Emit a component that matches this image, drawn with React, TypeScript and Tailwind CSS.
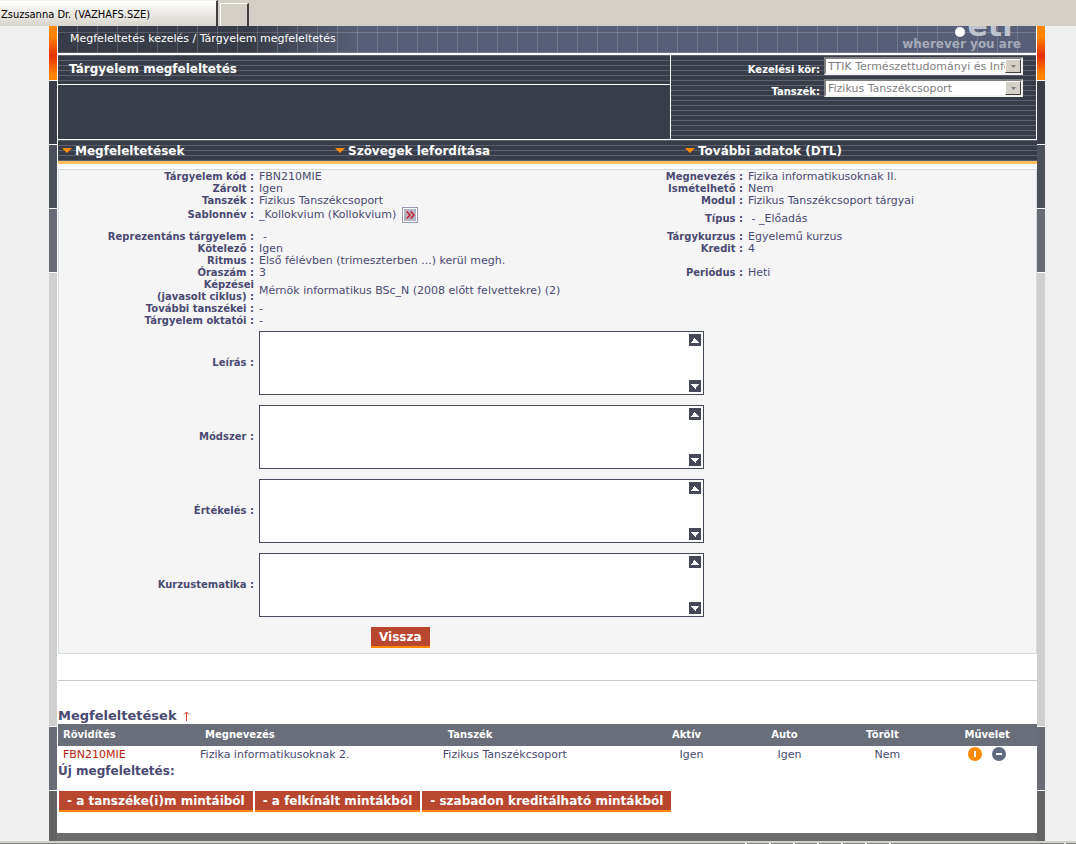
import React from 'react';

const lines =
  'bg-[#383c49] bg-[repeating-linear-gradient(to_bottom,#5d616d_0_1px,transparent_1px_5px)]';

function Rail() {
  return (
    <div aria-hidden="true" className="flex w-2 shrink-0 flex-col gap-px bg-white">
      <div className="h-[54px] bg-[linear-gradient(to_bottom,#ff8400_20%,#e62e00_55%,#ff8400_90%)]" />
      <div className="h-[63px] bg-[#3a3d47]" />
      <div className="h-[63px] bg-[#4c505a]" />
      <div className="h-[63px] bg-[#696c76]" />
      <div className="flex-1 bg-[#d0d0d0]" />
      <div className="h-[63px] bg-[#696c76]" />
      <div className="h-[50px] bg-[#636363]" />
    </div>
  );
}

function Pick({ id, label, value }: { id: string; label: string; value: string }) {
  return (
    <div className="flex h-[22px] items-start justify-end gap-1">
      <label htmlFor={id} className="pt-[5px] text-[10px] leading-4 font-bold text-white">
        {label}
      </label>
      <div className="relative w-[199px]">
        <select
          id={id}
          disabled
          className="block h-[18px] w-full appearance-none border-2 border-t-[#808080] border-r-[#f4f2ee] border-b-[#f4f2ee] border-l-[#808080] bg-white pt-px pr-4 pl-0.5 text-[11px] leading-3 text-[#808080] opacity-100"
        >
          <option>{value}</option>
        </select>
        <span className="pointer-events-none absolute top-0.5 right-0.5 flex h-3.5 w-4 items-center justify-center border border-t-white border-r-[#404040] border-b-[#404040] border-l-white bg-[#d4d0c8]">
          <svg width="5" height="3" viewBox="0 0 5 3" fill="#808080">
            <path d="M0 0h5L2.500 3z" />
          </svg>
        </span>
      </div>
    </div>
  );
}

function MenuItem({ children }: { children: React.ReactNode }) {
  return (
    <a href="#" className="flex items-center gap-[3px] text-xs leading-5 font-bold text-white">
      <svg width="10" height="5" viewBox="0 0 10 5" fill="#ff8a00">
        <path d="M0 0h10L5 5z" />
      </svg>
      {children}
    </a>
  );
}

function Field({
  label,
  value,
  tall = '',
}: {
  label: React.ReactNode;
  value?: React.ReactNode;
  tall?: string;
}) {
  return (
    <div className={`flex items-center gap-[5px] ${tall}`}>
      <dt className="w-[195px] shrink-0 text-right font-bold">{label}</dt>
      <dd className="min-w-0 flex-1 text-[11px]">{value}</dd>
    </div>
  );
}

function SideField({ label, value, tall = '' }: { label: string; value: string; tall?: string }) {
  return (
    <div className={`flex items-center gap-[5px] ${tall}`}>
      <dt className="w-[90px] shrink-0 text-right font-bold">{label}</dt>
      <dd className="min-w-0 flex-1 text-[11px] whitespace-pre">{value}</dd>
    </div>
  );
}

function Arrow({ up }: { up?: boolean }) {
  return (
    <button
      type="button"
      aria-label={up ? 'Fel' : 'Le'}
      className="flex h-3 w-3 items-center justify-center bg-[#444859]"
    >
      <svg width="8" height="5" viewBox="0 0 8 5" fill="#fff" shapeRendering="crispEdges">
        <path d={up ? 'M3 0h1v1h1v1h1v1h1v1h1v1H0V4h1V3h1V2h0V1h1z' : 'M0 0h8v1H7v1H6v1H5v2H4V4H3V3H2V2H1V1H0z'} />
      </svg>
    </button>
  );
}

function Memo({ id, label }: { id: string; label: string }) {
  return (
    <div className="flex items-center gap-[5px]">
      <label htmlFor={id} className="w-[195px] shrink-0 text-right font-bold">
        {label}
      </label>
      <div className="relative w-[445px]">
        <textarea
          id={id}
          readOnly
          className="block h-16 w-full resize-none border border-[#444859] bg-white p-1 pr-5 outline-none"
        />
        <div className="absolute inset-y-[3px] right-[3px] flex flex-col justify-between">
          <Arrow up />
          <Arrow />
        </div>
      </div>
    </div>
  );
}

function Action({ children }: { children: React.ReactNode }) {
  return (
    <button
      type="button"
      className="h-[21px] border-b-2 border-[#ff8a00] bg-[#b9472f] px-2 text-xs leading-4 font-bold text-white"
    >
      {children}
    </button>
  );
}

export default function App() {
  return (
    <div className="flex min-h-screen flex-col bg-[#efefef] font-['DejaVu_Sans',Verdana,sans-serif] text-[10px] leading-3 text-[#4a4a72]">
      <div className="flex h-[26px] shrink-0 items-end bg-[#d4d0c8]">
        <div className="flex h-[26px] w-[218px] items-center border-t border-r-2 border-t-[#f4f2ee] border-r-[#404040] bg-linear-to-b from-white to-[#d8d5ce] pt-0.5 pl-px font-['DejaVu_Sans_Condensed','DejaVu_Sans',sans-serif] text-[11px] text-black">
          Zsuzsanna Dr. (VAZHAFS.SZE)
        </div>
        <div className="ml-0.5 h-[23px] w-[29px] border-t border-r-2 border-l border-t-white border-r-[#404040] border-l-white" />
      </div>

      <div className="flex flex-1 pr-[31px] pl-[49px]">
        <Rail />
        <div className="flex min-w-0 flex-1 flex-col bg-white">
          <header className="relative ml-px mr-px h-[27px] overflow-hidden bg-[repeating-linear-gradient(to_right,transparent_0_19px,rgba(255,255,255,0.16)_19px_20px),linear-gradient(to_bottom,transparent_6px,rgba(255,255,255,0.16)_6px_7px,transparent_7px_26px,rgba(255,255,255,0.16)_26px),linear-gradient(to_right,#383c49_190px,#585e77_300px)]">
            <nav className="pt-[7px] pl-3 text-[11px] text-white">
              Megfeleltetés kezelés / Tárgyelem megfeleltetés
            </nav>
            <div className="absolute -top-3 right-[15px] text-right font-bold">
              <div className="flex items-end justify-end gap-[3px] pr-1 text-[30px] leading-6 text-[#bfc3d0]">
                <span className="mb-px h-2.5 w-2.5 rounded-full bg-white" />
                etr
              </div>
              <div className="text-xs leading-3 text-[#a6aaba]">wherever you are</div>
            </div>
          </header>

          <div className="mt-0.5 ml-px mr-px flex h-[84px]">
            <div className="flex min-w-0 flex-1 flex-col">
              <h1 className={`h-[29px] pl-[11px] text-xs leading-[29px] font-bold text-white ${lines}`}>
                Tárgyelem megfeleltetés
              </h1>
              <div className="mt-px flex-1 bg-[#383d4b]" />
            </div>
            <div className={`ml-px w-[365px] pt-0.5 pr-[13px] ${lines}`}>
              <Pick id="kor" label="Kezelési kör:" value="TTIK Természettudományi és Informatikai Kar" />
              <Pick id="tanszek" label="Tanszék:" value="Fizikus Tanszékcsoport" />
            </div>
          </div>

          <nav
            className={`mt-px ml-px grid h-6 grid-cols-[273fr_350fr_352fr] items-center border-b-[3px] border-[#ffc061] pl-1 ${lines}`}
          >
            <MenuItem>Megfeleltetések</MenuItem>
            <MenuItem>Szövegek lefordítása</MenuItem>
            <MenuItem>További adatok (DTL)</MenuItem>
          </nav>

          <section className="mt-[5px] ml-px border border-[#d3dddd] bg-[#f5f5f5] pb-[5px]">
            <div className="flex pt-px">
              <dl className="min-w-0 flex-1">
                <Field label="Tárgyelem kód :" value="FBN210MIE" />
                <Field label="Zárolt :" value="Igen" />
                <Field label="Tanszék :" value="Fizikus Tanszékcsoport" />
                <Field
                  label="Sablonnév :"
                  tall="h-4"
                  value={
                    <span className="flex items-center gap-1.5">
                      _Kollokvium (Kollokvium)
                      <button
                        type="button"
                        aria-label="Megnyitás"
                        className="flex h-4 w-4 items-center justify-center border border-[#9a9ab0] bg-[#b4b4c6] shadow-[inset_0_0_0_1px_#fff]"
                      >
                        <svg width="9" height="8" viewBox="0 0 9 8" fill="none" stroke="#c22430" strokeWidth="1.600">
                          <path d="M.7.5 4 4 .7 7.500M4.700.5 8 4 4.700 7.500" />
                        </svg>
                      </button>
                    </span>
                  }
                />
                <Field label="Reprezentáns tárgyelem :" value={<span className="pl-1">-</span>} tall="pt-2" />
                <Field label="Kötelező :" value="Igen" />
                <Field label="Ritmus :" value="Első félévben (trimeszterben ...) kerül megh." />
                <Field label="Óraszám :" value="3" />
                <Field
                  label={
                    <>
                      Képzései
                      <br />
                      (javasolt ciklus) :
                    </>
                  }
                  value="Mérnök informatikus BSc_N (2008 előtt felvettekre) (2)"
                />
                <Field label="További tanszékei :" value="-" />
                <Field label="Tárgyelem oktatói :" value="-" />
              </dl>
              <dl className="w-[383px] shrink-0">
                <SideField label="Megnevezés :" value="Fizika informatikusoknak II." />
                <SideField label="Ismételhető :" value="Nem" />
                <SideField label="Modul :" value="Fizikus Tanszékcsoport tárgyai" />
                <SideField label="Típus :" value=" - _Előadás" tall="h-6" />
                <SideField label="Tárgykurzus :" value="Egyelemű kurzus" />
                <SideField label="Kredit :" value="4" />
                <SideField label="Periódus :" value="Heti" tall="pt-3" />
              </dl>
            </div>
            <div className="flex flex-col gap-2.5 pt-1">
              <Memo id="leiras" label="Leírás :" />
              <Memo id="modszer" label="Módszer :" />
              <Memo id="ertekeles" label="Értékelés :" />
              <Memo id="tematika" label="Kurzustematika :" />
            </div>
            <div className="flex pt-2.5 pl-[312px]">
              <Action>Vissza</Action>
            </div>
          </section>

          <hr className="mt-[26px] ml-px border-[#cacaca]" />

          <h2 className="mt-[27px] ml-px flex items-center gap-1.5 text-[13px] leading-4 font-bold">
            Megfeleltetések
            <a href="#" aria-label="Fel">
              <svg width="7" height="10" viewBox="0 0 7 10" fill="none" stroke="#d4402c">
                <path d="M3.500 1v9M1 3.500 3.500 1 6 3.500" />
              </svg>
            </a>
          </h2>
          <table className="ml-px table-fixed border-collapse text-left">
            <colgroup>
              <col className="w-[14%]" />
              <col className="w-[25%]" />
              <col className="w-[20%]" />
              <col className="w-[10%]" />
              <col className="w-[10%]" />
              <col className="w-[10%]" />
              <col className="w-[11%]" />
            </colgroup>
            <thead className="h-[22px] bg-[#6a6d7a] text-white">
              <tr>
                <th className="pl-[5px]">Rövidítés</th>
                <th className="pl-2.5">Megnevezés</th>
                <th className="pl-2">Tanszék</th>
                <th className="pl-1 text-center">Aktív</th>
                <th className="pl-1 text-center">Auto</th>
                <th className="pl-1 text-center">Törölt</th>
                <th className="pl-2 text-center">Művelet</th>
              </tr>
            </thead>
            <tbody className="h-[17px] text-[11px]">
              <tr>
                <td className="pl-[5px]">
                  <a href="#" className="text-[#b9200c]">FBN210MIE</a>
                </td>
                <td className="pl-[5px]">Fizika informatikusoknak 2.</td>
                <td className="pl-[3px]">Fizikus Tanszékcsoport</td>
                <td className="pl-3.5 text-center">Igen</td>
                <td className="pl-3.5 text-center">Igen</td>
                <td className="pl-3.5 text-center">Nem</td>
                <td className="pb-0.5 pl-2">
                  <span className="flex justify-center gap-2.5">
                    <button type="button" aria-label="Inaktiválás">
                      <svg width="14" height="14" viewBox="0 0 14 14">
                        <circle cx="7" cy="7" r="7" fill="#ff8a00" />
                        <path fill="#fff" d="M6 4h2v6H6z" />
                      </svg>
                    </button>
                    <button type="button" aria-label="Törlés">
                      <svg width="14" height="14" viewBox="0 0 14 14">
                        <circle cx="7" cy="7" r="7" fill="#626a82" />
                        <path fill="#fff" d="M4 6h6v2H4z" />
                      </svg>
                    </button>
                  </span>
                </td>
              </tr>
            </tbody>
          </table>
          <h3 className="ml-px text-xs leading-4 font-bold">Új megfeleltetés:</h3>
          <div className="mt-3 ml-0.5 flex gap-0.5">
            <Action>- a tanszéke(i)m mintáiból</Action>
            <Action>- a felkínált mintákból</Action>
            <Action>- szabadon kreditálható mintákból</Action>
          </div>
          <div className="min-h-5 flex-1" />
          <div className="h-2 bg-[#6c6c6c]" />
        </div>
        <Rail />
      </div>

      <footer className="flex h-[3px] shrink-0 items-end bg-[#d4d0c8]">
        <div className="h-px flex-1 bg-[#808080]" />
        <div className="h-px w-6 border-l-2 border-white bg-[#808080]" />
        <div className="h-px w-6 border-l-2 border-white bg-[#808080]" />
        <div className="h-px w-6 border-l-2 border-white bg-[#808080]" />
        <div className="h-px w-6 border-l-2 border-white bg-[#808080]" />
        <div className="h-px w-6 border-l-2 border-white bg-[#808080]" />
        <div className="h-px w-6 border-l-2 border-white bg-[#808080]" />
        <div className="h-px w-[175px] border-l-2 border-white bg-[#808080]" />
        <div className="h-px w-3 border-l-2 border-white bg-[#808080]" />
      </footer>
    </div>
  );
}
